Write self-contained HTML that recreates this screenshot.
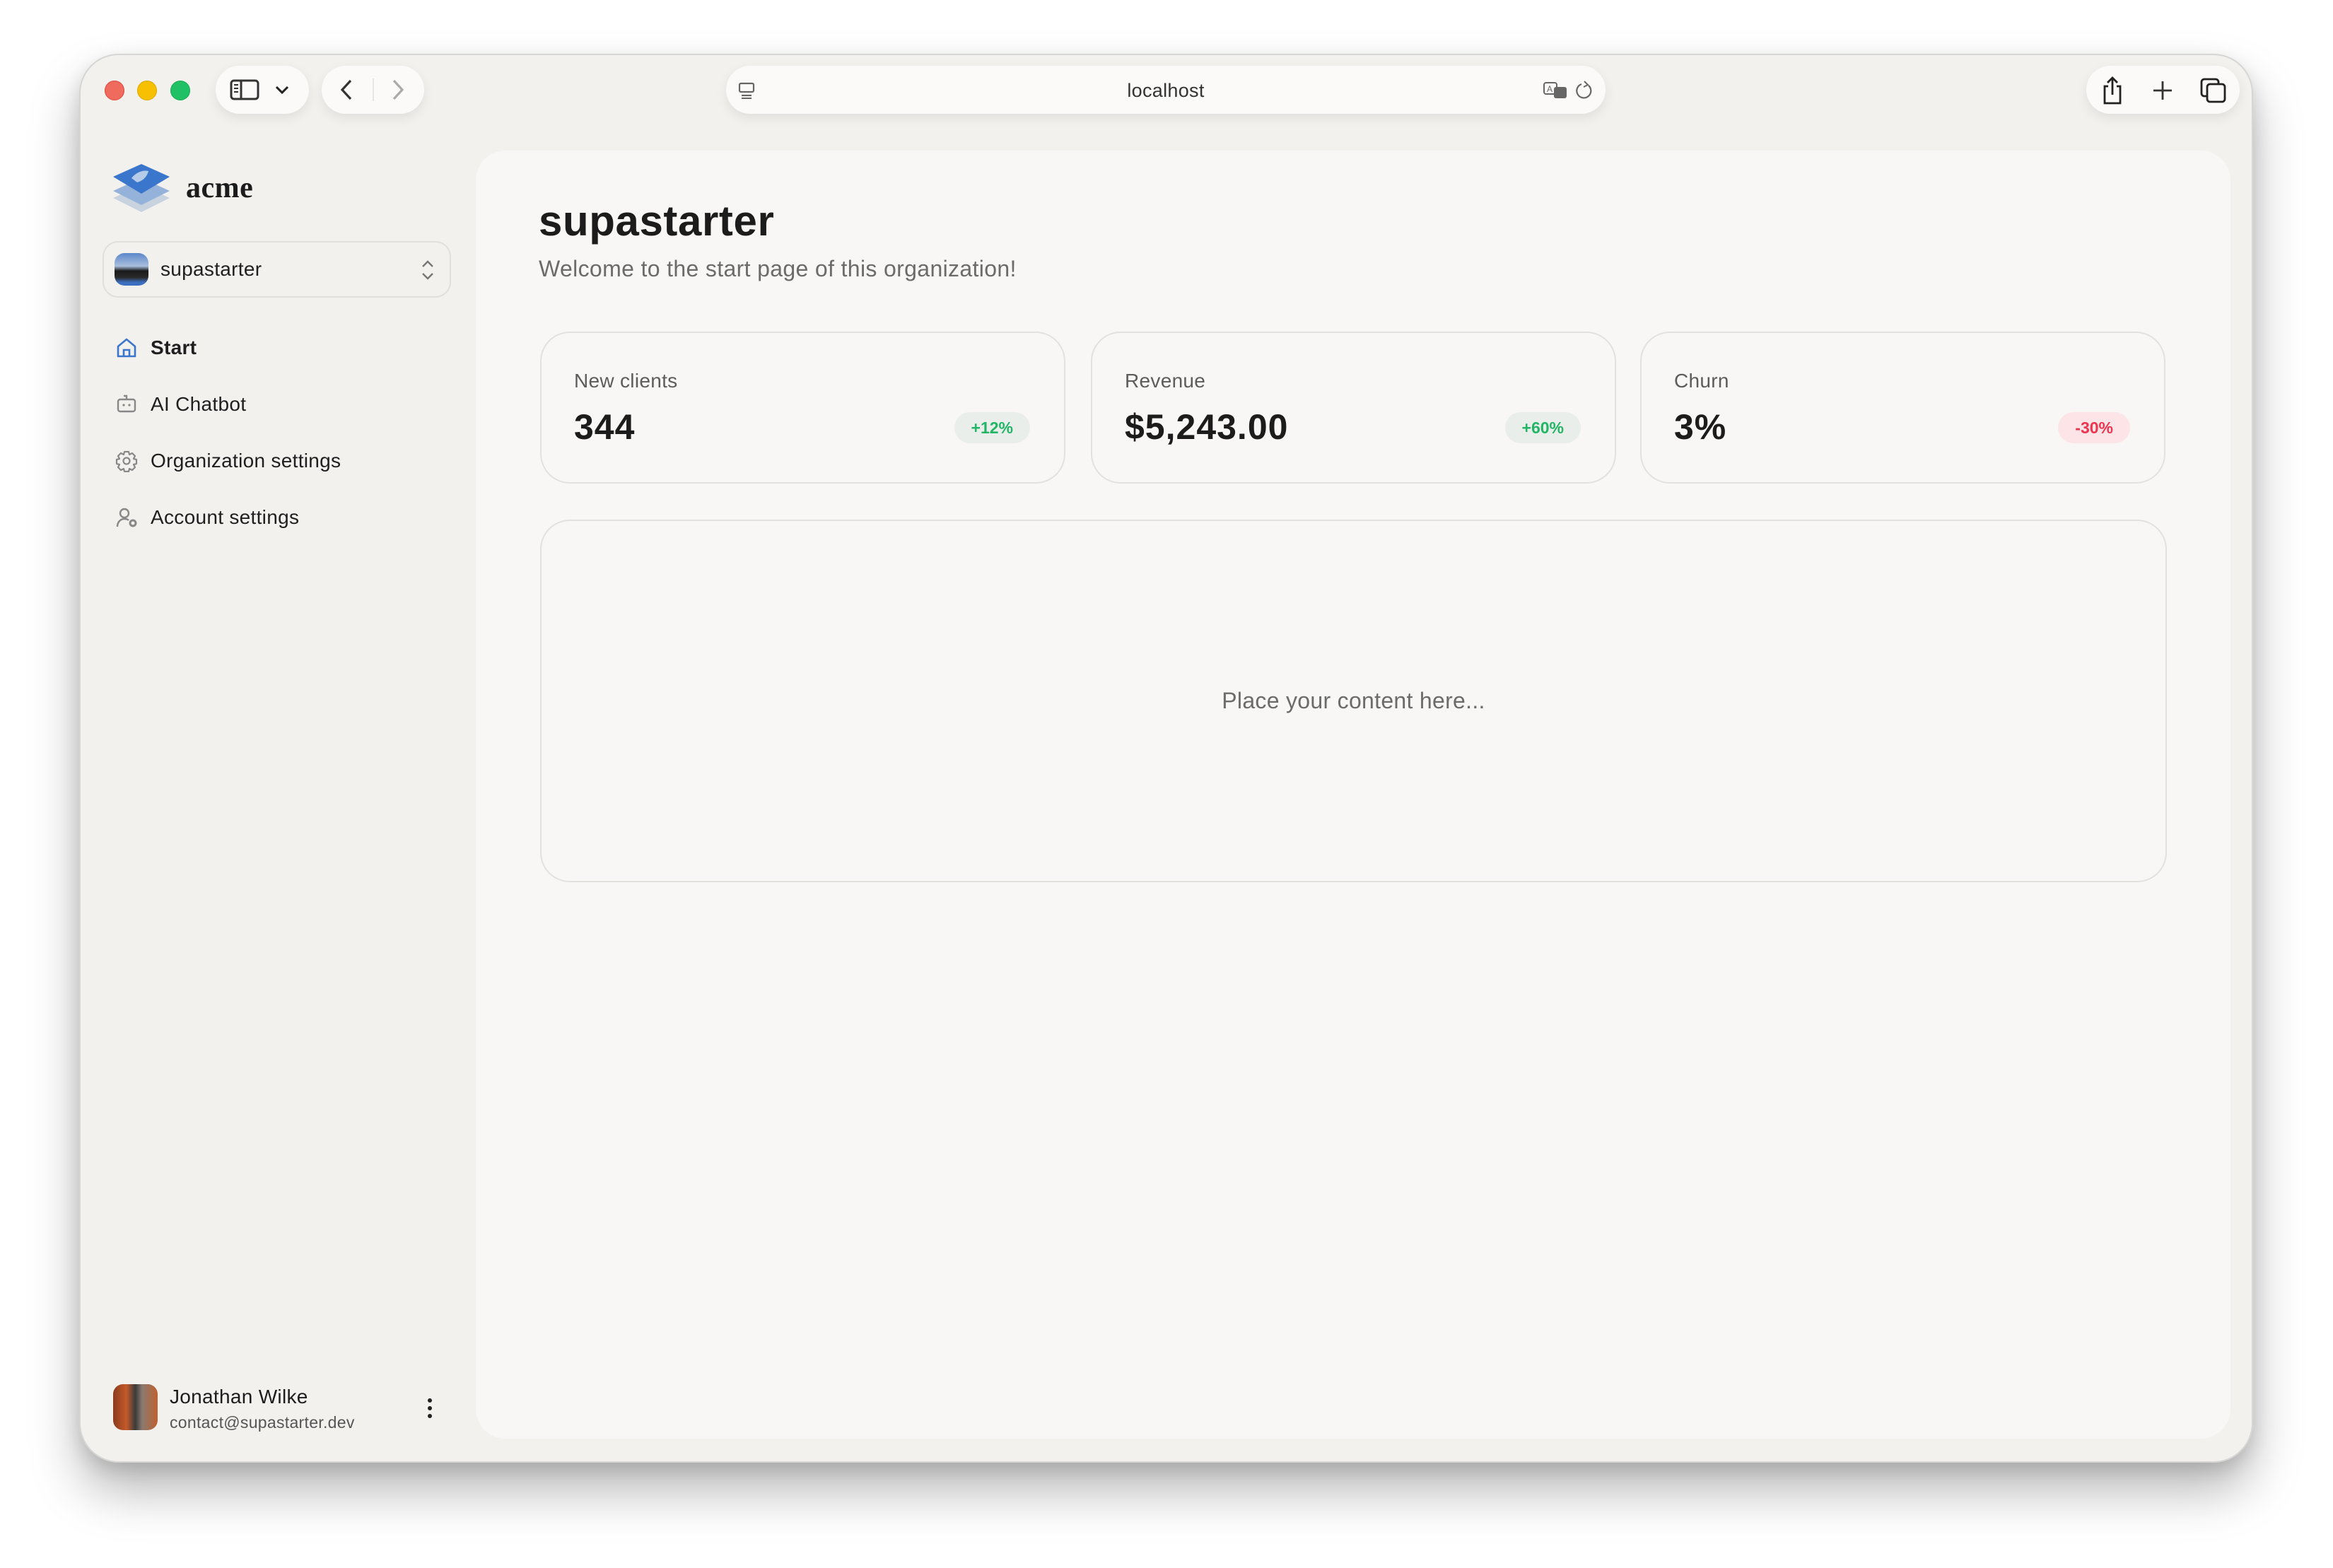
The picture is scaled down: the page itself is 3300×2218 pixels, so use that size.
<!DOCTYPE html>
<html><head><meta charset="utf-8">
<style>
*{box-sizing:border-box;margin:0;padding:0}
body{width:3300px;height:2218px;background:#fff;font-family:"Liberation Sans",sans-serif;position:relative;overflow:hidden;color:#1c1c1c}
.win{position:absolute;left:112px;top:76px;width:3075px;height:1993px;background:#f2f1ee;border-radius:56px;border:2px solid #d6d6d4;box-shadow:0 40px 70px rgba(0,0,0,.28),0 10px 25px rgba(0,0,0,.12)}
.abs{position:absolute}
.dot{position:absolute;top:114px;width:28px;height:28px;border-radius:50%}
.pill{position:absolute;top:93px;height:68px;background:#fbfaf8;border-radius:34px;box-shadow:0 6px 16px rgba(0,0,0,.08)}
.nav{position:absolute;left:213px;font-size:28px;color:#1f1f1f;transform:translateY(-50%);letter-spacing:0.3px}
.ico{position:absolute;left:163px;transform:translateY(-50%)}
.panel{position:absolute;left:673px;top:213px;width:2482px;height:1822px;background:#f8f7f5;border-radius:42px}
.card{position:absolute;top:469px;height:215px;width:743px;border:2px solid #e2e1de;border-radius:42px;background:#f8f7f5}
.lbl{position:absolute;left:46px;top:52px;font-size:28px;color:#5c5c5c;letter-spacing:0.3px}
.val{position:absolute;left:46px;top:104px;font-size:50px;font-weight:bold;color:#1c1c1c;letter-spacing:1px}
.badge{position:absolute;right:48px;top:112px;height:44px;border-radius:22px;font-size:23px;line-height:44px;padding:0 24px;font-weight:bold}
</style></head><body>
<div class="win"></div>
<div class="dot" style="left:148px;background:#ef6b5e;border:1px solid #e0443a"></div>
<div class="dot" style="left:194px;background:#f6c000;border:1px solid #dca800"></div>
<div class="dot" style="left:241px;background:#1fc164;border:1px solid #18a852"></div>

<div class="pill" style="left:305px;width:132px">
<svg class="abs" style="left:20px;top:19px" width="44" height="30" viewBox="0 0 44 30"><rect x="2" y="2" width="38" height="26" rx="4" fill="none" stroke="#333" stroke-width="3"/><line x1="16" y1="2" x2="16" y2="28" stroke="#333" stroke-width="3"/><line x1="6" y1="8" x2="12" y2="8" stroke="#333" stroke-width="2"/><line x1="6" y1="13" x2="12" y2="13" stroke="#333" stroke-width="2"/><line x1="6" y1="18" x2="12" y2="18" stroke="#333" stroke-width="2"/></svg>
<svg class="abs" style="left:83px;top:27px" width="22" height="14" viewBox="0 0 22 14"><path d="M3 3l8 8 8-8" fill="none" stroke="#222" stroke-width="3"/></svg>
</div>
<div class="pill" style="left:455px;width:145px">
<svg class="abs" style="left:25px;top:18px" width="20" height="32" viewBox="0 0 20 32"><path d="M16 3L4 16l12 13" fill="none" stroke="#333" stroke-width="3.2"/></svg>
<div class="abs" style="left:72px;top:18px;width:2px;height:32px;background:#e6e6e4"></div>
<svg class="abs" style="left:98px;top:18px" width="20" height="32" viewBox="0 0 20 32"><path d="M4 3l12 13L4 29" fill="none" stroke="#aaa" stroke-width="3.2"/></svg>
</div>
<div class="pill" style="left:1027px;width:1244px">
<svg class="abs" style="left:16px;top:22px" width="26" height="26" viewBox="0 0 26 26"><rect x="3" y="3" width="20" height="12" rx="2" fill="none" stroke="#666" stroke-width="2.2"/><line x1="6" y1="20" x2="20" y2="20" stroke="#666" stroke-width="2.2"/><line x1="6" y1="24" x2="20" y2="24" stroke="#666" stroke-width="2"/></svg>
<div class="abs" style="left:0;width:1244px;top:20px;text-align:center;font-size:27px;color:#333;letter-spacing:0.3px">localhost</div>
<svg class="abs" style="left:1155px;top:20px" width="40" height="32" viewBox="0 0 40 32"><rect x="2" y="4" width="18" height="16" rx="3" fill="none" stroke="#666" stroke-width="2"/><text x="6" y="17" font-size="12" fill="#666" font-family="Liberation Sans">A</text><rect x="16" y="10" width="18" height="16" rx="3" fill="#666"/></svg>
<svg class="abs" style="left:1200px;top:20px" width="28" height="30" viewBox="0 0 28 30"><path d="M20 8a10 10 0 1 1-10-2" fill="none" stroke="#666" stroke-width="2.2"/><path d="M14 2l5 5-6 3" fill="none" stroke="#666" stroke-width="2"/></svg>
</div>
<div class="pill" style="left:2951px;width:217px">
<svg class="abs" style="left:20px;top:14px" width="34" height="42" viewBox="0 0 34 42"><path d="M11 15H6v24h22V15h-5" fill="none" stroke="#222" stroke-width="2.8"/><path d="M17 3v24M10 10l7-7 7 7" fill="none" stroke="#222" stroke-width="2.8"/></svg>
<svg class="abs" style="left:93px;top:20px" width="30" height="30" viewBox="0 0 30 30"><path d="M15 2v26M2 15h26" stroke="#333" stroke-width="2.8"/></svg>
<svg class="abs" style="left:160px;top:16px" width="40" height="38" viewBox="0 0 40 38"><rect x="3" y="3" width="24" height="24" rx="4" fill="none" stroke="#222" stroke-width="2.8"/><rect x="11" y="10" width="25" height="25" rx="4" fill="#fbfaf8" stroke="#222" stroke-width="2.8"/></svg>
</div>

<svg class="abs" style="left:156px;top:228px" width="88" height="76" viewBox="0 0 88 76"><path d="M44 34l40 18-40 20L4 52z" fill="#c9d3df"/><path d="M44 24l40 18-40 20L4 42z" fill="#95b3da"/><path d="M44 4l40 18-40 24L4 22z" fill="#3a76cc"/><path d="M30 24c6-8 16-12 24-10-2 8-8 14-16 16z" fill="#b6cbe8"/></svg>
<div class="abs" style="left:263px;top:242px;font-family:'Liberation Serif',serif;font-weight:bold;font-size:42px;color:#1c1c1c;letter-spacing:0.5px">acme</div>

<div class="abs" style="left:145px;top:341px;width:493px;height:80px;border:2px solid #e0dfdc;border-radius:22px"></div>
<div class="abs" style="left:162px;top:358px;width:48px;height:46px;border-radius:14px;background:linear-gradient(#5b86c9 0%,#a9bfdd 40%,#1a1a1a 55%,#2a2a2a 75%,#3d6fbf 90%)"></div>
<div class="abs" style="left:227px;top:365px;font-size:28px;color:#1f1f1f;letter-spacing:0.3px">supastarter</div>
<svg class="abs" style="left:594px;top:366px" width="22" height="32" viewBox="0 0 22 32"><path d="M4 11l7-7 7 7M4 21l7 7 7-7" fill="none" stroke="#777" stroke-width="2.4"/></svg>

<svg class="ico" style="top:492px" width="32" height="32" viewBox="0 0 32 32"><path d="M4 14L16 4l12 10v14H4z" fill="none" stroke="#3a76cc" stroke-width="2.6" stroke-linejoin="round"/><path d="M12 28v-9h8v9" fill="none" stroke="#3a76cc" stroke-width="2.6"/></svg>
<div class="nav" style="top:492px;font-weight:bold">Start</div>
<svg class="ico" style="top:572px" width="32" height="32" viewBox="0 0 32 32"><rect x="4" y="9" width="24" height="17" rx="3" fill="none" stroke="#888" stroke-width="2.4"/><path d="M16 9V4h-4" fill="none" stroke="#888" stroke-width="2.4"/><circle cx="12" cy="17" r="1.6" fill="#888"/><circle cx="20" cy="17" r="1.6" fill="#888"/></svg>
<div class="nav" style="top:572px">AI Chatbot</div>
<svg class="ico" style="top:652px" width="32" height="32" viewBox="0 0 32 32"><path d="M13 3h6l1 4 4-2 4 4-2 4 4 1v6l-4 1 2 4-4 4-4-2-1 4h-6l-1-4-4 2-4-4 2-4-4-1v-6l4-1-2-4 4-4 4 2z" fill="none" stroke="#888" stroke-width="2.2" stroke-linejoin="round"/><circle cx="16" cy="16" r="4.5" fill="none" stroke="#888" stroke-width="2.2"/></svg>
<div class="nav" style="top:652px">Organization settings</div>
<svg class="ico" style="top:732px" width="34" height="32" viewBox="0 0 34 32"><circle cx="13" cy="10" r="6" fill="none" stroke="#888" stroke-width="2.4"/><path d="M3 29c0-7 5-11 10-11 3 0 5 1 6 2" fill="none" stroke="#888" stroke-width="2.4"/><circle cx="25" cy="24" r="4" fill="none" stroke="#888" stroke-width="3"/></svg>
<div class="nav" style="top:732px">Account settings</div>

<div class="abs" style="left:160px;top:1958px;width:63px;height:65px;border-radius:14px;background:linear-gradient(90deg,#8a3a1e,#c55a2a 30%,#3a3a3a 50%,#8a7a70 65%,#c06030)"></div>
<div class="abs" style="left:240px;top:1960px;font-size:28px;color:#1c1c1c;letter-spacing:0.3px">Jonathan Wilke</div>
<div class="abs" style="left:240px;top:1999px;font-size:23px;color:#555;letter-spacing:0.3px">contact@supastarter.dev</div>
<svg class="abs" style="left:600px;top:1976px" width="16" height="32" viewBox="0 0 16 32"><circle cx="8" cy="5" r="3" fill="#222"/><circle cx="8" cy="16" r="3" fill="#222"/><circle cx="8" cy="27" r="3" fill="#222"/></svg>

<div class="panel"></div>
<div class="abs" style="left:762px;top:278px;font-size:60px;font-weight:bold;color:#1c1c1c;letter-spacing:0.6px">supastarter</div>
<div class="abs" style="left:762px;top:362px;font-size:32px;color:#6b6b6b;letter-spacing:0.35px">Welcome to the start page of this organization!</div>

<div class="card" style="left:764px"><div class="lbl">New clients</div><div class="val">344</div><div class="badge" style="background:#eaeeea;color:#22b566">+12%</div></div>
<div class="card" style="left:1543px"><div class="lbl">Revenue</div><div class="val">$5,243.00</div><div class="badge" style="background:#eaeeea;color:#22b566">+60%</div></div>
<div class="card" style="left:2320px"><div class="lbl">Churn</div><div class="val">3%</div><div class="badge" style="background:#fde4e6;color:#ee3550">-30%</div></div>

<div class="abs" style="left:764px;top:735px;width:2301px;height:513px;border:2px solid #e2e1de;border-radius:42px"></div>
<div class="abs" style="left:764px;width:2301px;top:973px;text-align:center;font-size:32px;color:#6b6b6b;letter-spacing:0.3px">Place your content here...</div>
</body></html>
